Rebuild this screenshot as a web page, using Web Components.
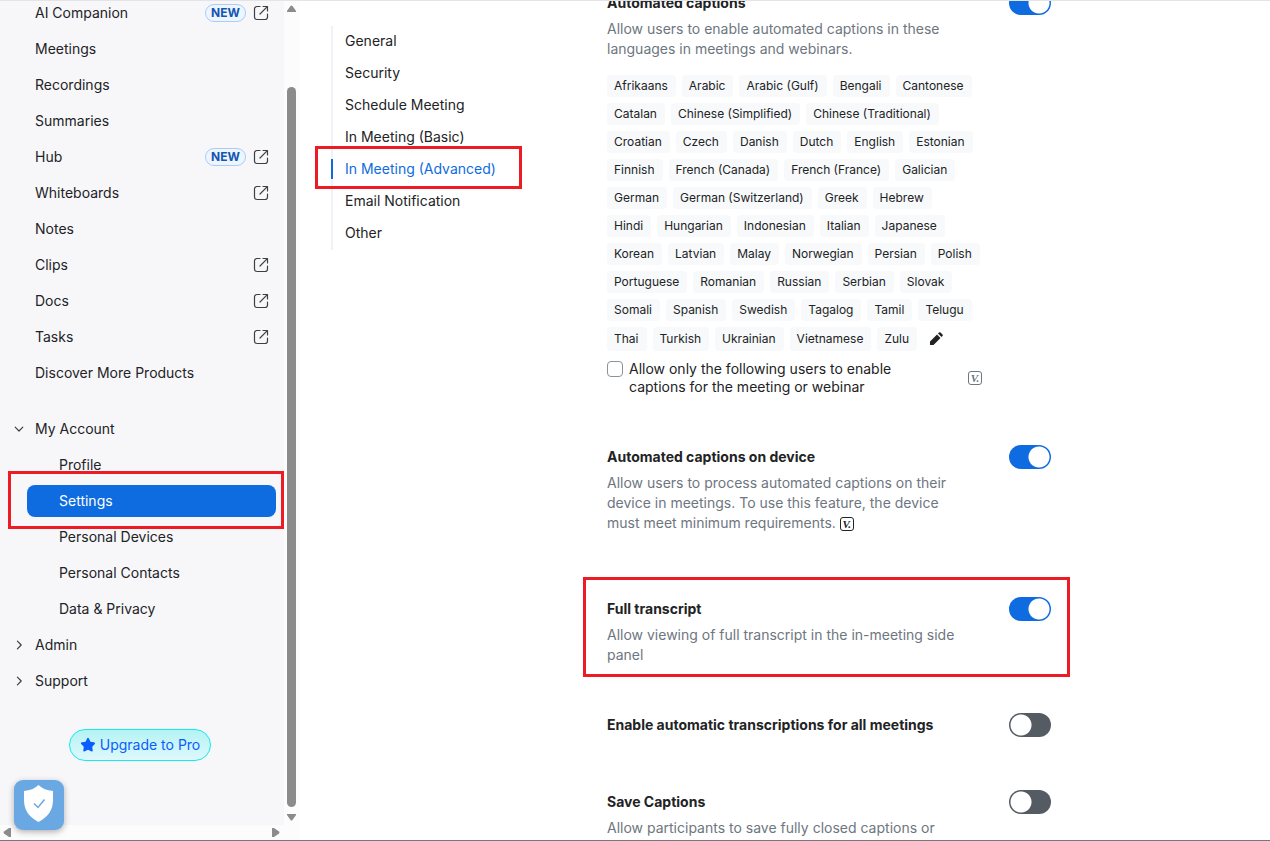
<!DOCTYPE html>
<html lang="en">
<head>
<meta charset="utf-8">
<title>Settings</title>
<style>
  body {
    margin: 0;
    height: 100vh;
    overflow: hidden;
    font: 14px/20px Inter, "Liberation Sans", sans-serif;
    color: #222325;
    background: #fff;
  }
</style>
</head>
<body>
<settings-app></settings-app>

<script>
class MarkBox extends HTMLElement {
  constructor() {
    super();
    this.attachShadow({ mode: 'open' }).innerHTML = `
      <style>
        :host {
          position: absolute;
          inset: var(--mark-inset, 0);
          border: 3px solid #ed1c24;
          pointer-events: none;
          z-index: 2;
        }
      </style>
    `;
  }
}
customElements.define('mark-box', MarkBox);

class NavItem extends HTMLElement {
  connectedCallback() {
    const isNew = this.hasAttribute('new');
    const external = this.hasAttribute('external');
    const expand = this.getAttribute('expand');
    const selected = this.hasAttribute('selected');
    this.attachShadow({ mode: 'open' }).innerHTML = `
      <style>
        :host { display: block; position: relative; }
        a {
          display: flex;
          align-items: center;
          height: 20px;
          padding: 0 15px 0 35px;
          color: inherit;
          text-decoration: none;
        }
        :host([sub]) a { padding-left: 59px; }
        :host([selected]) { margin: -6px 8px -6px 27px; }
        :host([selected]) a {
          padding: 6px 32px;
          border-radius: 8px;
          background: #0e6be0;
          color: #fff;
        }
        .text { flex: 1; }
        .chevron { width: 10px; height: 10px; margin: 0 11px 0 -21px; }
        .badge {
          margin-right: 7px;
          padding: 0 5px;
          border: 1px solid #a6cdfb;
          border-radius: 9px;
          background: #edf6ff;
          color: #1554b0;
          font-size: 12px;
          font-weight: 700;
          line-height: 16px;
        }
        .open { width: 16px; height: 16px; }
        svg { fill: none; stroke: #3c3f45; stroke-width: 1.2; stroke-linecap: round; stroke-linejoin: round; }
        mark-box { --mark-inset: -14px -8px -12px -19px; }
      </style>
      <a href="#">
        ${expand ? `<svg class="chevron" viewBox="0 0 10 10"><path d="${expand === 'open' ? 'M1.2 3.2 5 7l3.8-3.8' : 'M3.4 1.2 7.2 5 3.4 8.8'}"/></svg>` : ''}
        <span class="text"><slot></slot></span>
        ${isNew ? '<span class="badge">NEW</span>' : ''}
        ${external ? '<svg class="open" viewBox="0 0 16 16"><path d="M7 1.5H4A2.5 2.5 0 0 0 1.5 4v8A2.5 2.5 0 0 0 4 14.5h8a2.5 2.5 0 0 0 2.5-2.5V9M10 1.5h4.5V6M14.3 1.7 7 9"/></svg>' : ''}
      </a>
      ${selected ? '<mark-box></mark-box>' : ''}
    `;
  }
}
customElements.define('nav-item', NavItem);

class ScrollRail extends HTMLElement {
  constructor() {
    super();
    this.attachShadow({ mode: 'open' }).innerHTML = `
      <style>
        :host {
          display: flex;
          flex-direction: column;
          align-items: center;
          width: 16px;
          box-sizing: border-box;
          padding: 4px 1px 19px 0;
          background: #fcfcfc;
        }
        svg { width: 9px; height: 8px; fill: #8b8b8b; }
        .thumb { flex: 1; width: 9px; margin: 74px 0 6px; border-radius: 5px; background: #8b8b8b; }
      </style>
      <svg viewBox="0 0 9 8"><path d="M3.5 1Q4.5 0 5.5 1L9 6v1H0V6z"/></svg>
      <div class="thumb"></div>
      <svg viewBox="0 0 9 8"><path d="M0 1h9v1L5.5 7Q4.5 8 3.5 7L0 2z"/></svg>
    `;
  }
}
customElements.define('scroll-rail', ScrollRail);

class SideBar extends HTMLElement {
  constructor() {
    super();
    this.attachShadow({ mode: 'open' }).innerHTML = `
      <style>
        :host { display: flex; flex: 0 0 300px; min-height: 0; position: relative; }
        .panel { flex: 1; min-width: 0; display: flex; flex-direction: column; }
        nav {
          flex: 1;
          min-height: 0;
          display: flex;
          flex-direction: column;
          gap: 16px;
          padding-top: 2px;
          background: #f7f7fa;
        }
        .account { margin-top: 20px; }
        .upgrade {
          display: flex;
          align-items: center;
          gap: 4px;
          align-self: center;
          height: 32px;
          margin: 22px 4px 0 0;
          padding: 0 10px;
          border: 1px solid #12ecec;
          border-radius: 16px;
          background: linear-gradient(#b5f3f3, #def8fb);
          color: #0b5cff;
          font: inherit;
        }
        .upgrade svg { width: 16px; height: 16px; fill: #0b5cff; }
        .hscroll {
          display: flex;
          justify-content: space-between;
          align-items: center;
          height: 15px;
          padding: 0 4px 0 3px;
          background: #fcfcfc;
        }
        .hscroll svg { width: 8px; height: 9px; fill: #8b8b8b; }
        .shield {
          position: absolute;
          left: 14px;
          bottom: 10px;
          width: 50px;
          height: 50px;
          padding: 0;
          border: 0;
          border-radius: 9px;
          background: #69a8e3;
          box-shadow: 0 2px 6px rgba(0, 0, 0, 0.3);
        }
        .shield svg { display: block; width: 50px; height: 50px; }
      </style>
      <div class="panel">
        <nav>
          <nav-item new external>AI Companion</nav-item>
          <nav-item>Meetings</nav-item>
          <nav-item>Recordings</nav-item>
          <nav-item>Summaries</nav-item>
          <nav-item new external>Hub</nav-item>
          <nav-item external>Whiteboards</nav-item>
          <nav-item>Notes</nav-item>
          <nav-item external>Clips</nav-item>
          <nav-item external>Docs</nav-item>
          <nav-item external>Tasks</nav-item>
          <nav-item>Discover More Products</nav-item>
          <nav-item class="account" expand="open">My Account</nav-item>
          <nav-item sub>Profile</nav-item>
          <nav-item selected>Settings</nav-item>
          <nav-item sub>Personal Devices</nav-item>
          <nav-item sub>Personal Contacts</nav-item>
          <nav-item sub>Data &amp; Privacy</nav-item>
          <nav-item expand="closed">Admin</nav-item>
          <nav-item expand="closed">Support</nav-item>
          <button class="upgrade" type="button">
            <svg viewBox="0 0 16 16"><path d="M7 1.7q1-1.7 2 0l1.5 3 3.5.6q1.9.4.6 1.9l-2.4 2.5.5 3.5q.2 1.9-1.6 1.1L8 12.8l-3.100 1.5q-1.8.8-1.6-1.1l.5-3.5-2.4-2.5Q.1 5.7 2 5.3l3.5-.6z"/></svg>
            Upgrade to Pro
          </button>
        </nav>
        <div class="hscroll">
          <svg viewBox="0 0 8 9"><path d="M1 3.5Q0 4.5 1 5.5L6 9h2V0H6z"/></svg>
          <svg viewBox="0 0 8 9"><path d="M7 3.5Q8 4.5 7 5.5L2 9H0V0h2z"/></svg>
        </div>
      </div>
      <scroll-rail></scroll-rail>
      <button class="shield" type="button" aria-label="Privacy">
        <svg viewBox="0 0 50 50">
          <path fill="#fff" d="M24.5 5C28 8.5 33 10.5 39 11v9c0 10-5 17-14.5 22C15 37 10 30 10 20v-9c6-.5 11-2.5 14.5-6z"/>
          <path fill="none" stroke="#69a8e3" stroke-width="1.5" d="m20 23.5 4 4 6.5-8"/>
        </svg>
      </button>
    `;
  }
}
customElements.define('side-bar', SideBar);

class SectionLink extends HTMLElement {
  connectedCallback() {
    this.attachShadow({ mode: 'open' }).innerHTML = `
      <style>
        :host { display: block; position: relative; margin-left: -2px; padding: 5px 0 7px; }
        a {
          display: block;
          padding-left: 12px;
          border-left: 2px solid transparent;
          color: inherit;
          text-decoration: none;
        }
        :host([active]) a { border-color: #0e6be0; color: #0e6be0; }
        mark-box { --mark-inset: -8px 85px -3px -16px; }
      </style>
      <a href="#"><slot></slot></a>
      ${this.hasAttribute('active') ? '<mark-box></mark-box>' : ''}
    `;
  }
}
customElements.define('section-link', SectionLink);

class SectionNav extends HTMLElement {
  constructor() {
    super();
    this.attachShadow({ mode: 'open' }).innerHTML = `
      <style>
        :host { display: block; flex: 0 0 276px; padding-top: 25px; }
        nav { border-left: 2px solid #eff3f8; }
      </style>
      <nav><slot></slot></nav>
    `;
  }
}
customElements.define('section-nav', SectionNav);

class SettingRow extends HTMLElement {
  connectedCallback() {
    this.attachShadow({ mode: 'open' }).innerHTML = `
      <style>
        :host { display: flex; justify-content: space-between; align-items: flex-start; position: relative; }
        .body { flex: 0 1 380px; }
        h3 { margin: 0; font-size: 14px; font-weight: 700; line-height: 24px; }
        .desc { margin-top: 4px; color: #6e7680; }
        input {
          appearance: none;
          flex: none;
          width: 42px;
          height: 24px;
          margin: 0;
          border-radius: 12px;
          background: radial-gradient(circle at 12px 12px, #fff 10px, #555b63 11px);
        }
        input:checked { background: radial-gradient(circle at 30px 12px, #fff 10px, #0e6be0 11px); }
        mark-box { --mark-inset: -20px -19px -12px -24px; }
      </style>
      <div class="body">
        <h3><label for="toggle">${this.getAttribute('heading')}</label></h3>
        <div class="desc"><slot></slot></div>
        <slot name="extra"></slot>
      </div>
      <input id="toggle" type="checkbox" role="switch" ${this.hasAttribute('on') ? 'checked' : ''}>
      ${this.hasAttribute('marked') ? '<mark-box></mark-box>' : ''}
    `;
  }
}
customElements.define('setting-row', SettingRow);

// small "V." badge shown beside a setting that needs a given app version
class VersionIcon extends HTMLElement {
  constructor() {
    super();
    this.attachShadow({ mode: 'open' }).innerHTML = `
      <style>
        :host {
          display: inline-block;
          box-sizing: border-box;
          width: 14px;
          height: 14px;
          border: 1px solid;
          border-radius: 3px;
          color: #222325;
          font: italic 700 11px/12px "Liberation Serif", serif;
          text-align: center;
        }
        :host([muted]) { color: #6e7680; }
      </style>V.`;
  }
}
customElements.define('version-icon', VersionIcon);

const LANGUAGES = [
  ['Afrikaans', 'Arabic', 'Arabic (Gulf)', 'Bengali', 'Cantonese'],
  ['Catalan', 'Chinese (Simplified)', 'Chinese (Traditional)'],
  ['Croatian', 'Czech', 'Danish', 'Dutch', 'English', 'Estonian'],
  ['Finnish', 'French (Canada)', 'French (France)', 'Galician'],
  ['German', 'German (Switzerland)', 'Greek', 'Hebrew'],
  ['Hindi', 'Hungarian', 'Indonesian', 'Italian', 'Japanese'],
  ['Korean', 'Latvian', 'Malay', 'Norwegian', 'Persian', 'Polish'],
  ['Portuguese', 'Romanian', 'Russian', 'Serbian', 'Slovak'],
  ['Somali', 'Spanish', 'Swedish', 'Tagalog', 'Tamil', 'Telugu'],
  ['Thai', 'Turkish', 'Ukrainian', 'Vietnamese', 'Zulu'],
];

class CaptionLanguages extends HTMLElement {
  connectedCallback() {
    const rows = LANGUAGES.map((row, i) => `
      <div class="row">
        ${row.map((name) => `<span class="chip">${name}</span>`).join('')}
        ${i === LANGUAGES.length - 1 ? `
          <button type="button" aria-label="Edit languages">
            <svg viewBox="0 0 14 14"><path d="M1 13V9.5L8 2.5 11.5 6l-7 7zM9 1.5l1-1q.8-.7 1.6 0l1.9 1.9q.7.8 0 1.6l-1 1z"/></svg>
          </button>` : ''}
      </div>
    `).join('');
    this.attachShadow({ mode: 'open' }).innerHTML = `
      <style>
        :host { display: block; margin-top: 16px; }
        .list { display: flex; flex-direction: column; gap: 6px; }
        .row { display: flex; gap: 6px; white-space: nowrap; }
        .chip {
          padding: 0 8px 0 7px;
          border-radius: 4px;
          background: #f7f9fa;
          font-size: 12px;
          line-height: 22px;
        }
        .row:last-child .chip { line-height: 24px; }
        button { display: flex; align-items: center; margin-left: 6px; padding: 0; border: 0; background: none; }
        svg { width: 14px; height: 14px; fill: #222325; }
        .users { display: flex; align-items: center; justify-content: space-between; margin: 9px 5px 0 0; }
        .option { display: flex; gap: 6px; line-height: 18px; }
        input {
          appearance: none;
          flex: none;
          width: 16px;
          height: 16px;
          margin: 1px 0 0;
          border: 1px solid #8c929b;
          border-radius: 4px;
          background: #fff;
        }
      </style>
      <div class="list">${rows}</div>
      <div class="users">
        <div class="option">
          <input id="users" type="checkbox">
          <label for="users">Allow only the following users to enable<br>captions for the meeting or webinar</label>
        </div>
        <version-icon muted></version-icon>
      </div>
    `;
  }
}
customElements.define('caption-languages', CaptionLanguages);

class SettingsApp extends HTMLElement {
  constructor() {
    super();
    this.attachShadow({ mode: 'open' }).innerHTML = `
      <style>
        :host {
          display: flex;
          height: 100%;
          box-sizing: border-box;
          border-top: 1px solid #e4e4e8;
          border-bottom: 1px solid #77777b;
        }
        main { flex: 1; display: flex; min-width: 0; min-height: 0; overflow: hidden; padding-left: 31px; }
        /* the list is scrolled a little way into its first setting */
        .settings { flex: 0 1 444px; margin-top: -10px; display: flex; flex-direction: column; }
        setting-row { margin-bottom: 49px; }
        setting-row[marked] { margin-bottom: 48px; }
        .spaced { margin-bottom: 64px; }
        .spaced version-icon { margin-top: 4px; vertical-align: top; }
      </style>
      <side-bar></side-bar>
      <main>
        <section-nav>
          <section-link>General</section-link>
          <section-link>Security</section-link>
          <section-link>Schedule Meeting</section-link>
          <section-link>In Meeting (Basic)</section-link>
          <section-link active>In Meeting (Advanced)</section-link>
          <section-link>Email Notification</section-link>
          <section-link>Other</section-link>
        </section-nav>
        <section class="settings">
          <setting-row heading="Automated captions" on>
            Allow users to enable automated captions in these<br>languages in meetings and webinars.
            <caption-languages slot="extra"></caption-languages>
          </setting-row>
          <setting-row class="spaced" heading="Automated captions on device" on>
            Allow users to process automated captions on their<br>device in meetings. To use this feature, the device<br>must meet minimum requirements. <version-icon></version-icon>
          </setting-row>
          <setting-row heading="Full transcript" on marked>
            Allow viewing of full transcript in the in-meeting side<br>panel
          </setting-row>
          <setting-row heading="Enable automatic transcriptions for all meetings"></setting-row>
          <setting-row heading="Save Captions">
            Allow participants to save fully closed captions or
          </setting-row>
        </section>
      </main>
    `;
  }
}
customElements.define('settings-app', SettingsApp);
</script>
</body>
</html>
